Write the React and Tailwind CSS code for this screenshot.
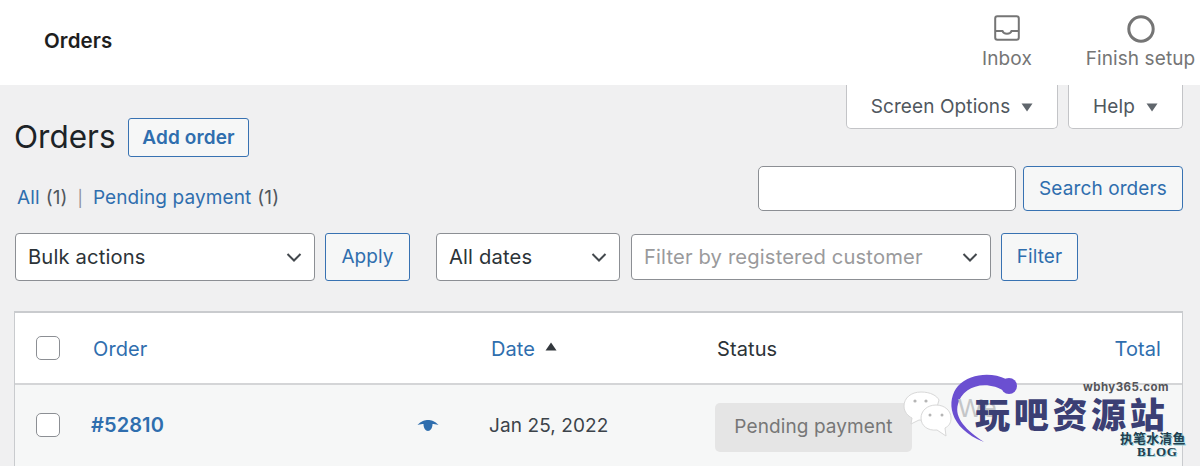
import React from 'react';

const blueBtn = 'flex items-center justify-center rounded-[3px] border-[1.5px] border-[#3872b2] bg-[#f6f7f7] pt-[1px] text-[#2f6eae]';

const Chevron = ({ className }) => (
  <svg width="18" height="12" viewBox="0 0 18 12" fill="none" className={className}>
    <path d="M2.5 3 L9 9.5 L15.5 3" stroke="#43484d" strokeWidth="2" />
  </svg>
);

const Select = ({ label, placeholder, className }) => (
  <div className={`flex items-center justify-between rounded-[4px] border-[1.5px] border-[#8c8f94] bg-white pl-3 pr-[11px] text-[20.2px] tracking-[0.15px] ${className}`}>
    <span className={`pt-[1px] ${placeholder ? 'text-[#9a9a9c]' : 'text-[#2c3338]'}`}>{label}</span>
    <Chevron />
  </div>
);

const Checkbox = () => (
  <div className="h-6 w-6 rounded-[5px] border-[1.5px] border-[#8c8f94] bg-white" />
);

const Caret = () => (
  <svg width="12" height="9" viewBox="0 0 12 9">
    <path d="M0.5 0.5 H11.5 L6 8.5 Z" fill="#60666c" />
  </svg>
);

const TopItem = ({ icon, label, className }) => (
  <div className={`flex flex-col items-center ${className}`}>
    {icon}
    <span className="mt-[6px] whitespace-nowrap text-[19px] leading-6 text-[#757575]">{label}</span>
  </div>
);

const Watermark = () => (
  <div className="absolute left-[900px] top-[370px] h-[96px] w-[300px]">
    <svg width="300" height="96" viewBox="0 0 300 96" className="absolute left-0 top-0">
      <path d="M106 9 C92 2 70 3 58 16 C46 30 48 58 84 72 C66 60 54 48 58 34 C62 18 84 8 106 22 Z" fill="#6b4fd1" />
      <circle cx="109" cy="16" r="8" fill="#6b4fd1" />
      <g fill="#fff" stroke="#d8d8d8" strokeWidth="1">
        <path d="M21 22 C11 22 4 28 4 36 C4 42 8 46 12 48 L11 54 L19 50 C27 51 33 48 35 44 L39 30 C37 26 31 22 21 22 Z" />
        <path d="M36 35 C27 35 21 41 21 48 C21 56 28 61 37 60 L46 66 L45 58 C49 56 51 53 51 48 C51 41 45 35 36 35 Z" />
      </g>
      <g fill="#b5b5b5">
        <circle cx="15" cy="31" r="1.6" />
        <circle cx="26" cy="31" r="1.6" />
        <circle cx="30" cy="45" r="1.5" />
        <circle cx="42" cy="45" r="1.5" />
      </g>
    </svg>
    <span className="absolute left-[58px] top-[22px] text-[26px] leading-8 text-[#c4c6c8] [font-family:'Liberation_Sans',sans-serif]">We</span>
    <span className="absolute left-[183px] top-[9px] text-[11.5px] font-bold leading-4 tracking-[0.45px] text-[#55555a]">wbhy365.com</span>
    <span className="absolute left-[75px] top-[23px] whitespace-nowrap text-[35px] font-black leading-10 tracking-[3.7px] text-[#3b3f74] [font-family:'Noto_Sans_CJK_SC',sans-serif]">玩吧资源站</span>
    <span className="absolute left-[220px] top-[60px] whitespace-nowrap text-[13px] font-bold leading-4 text-[#22404f] [font-family:'Noto_Sans_CJK_SC',sans-serif] [text-shadow:1px_1px_0_#9fd4dc]">执笔水清鱼</span>
    <span className="absolute left-[237px] top-[74px] text-[13px] font-bold leading-4 tracking-[0.8px] text-[#22404f] [font-family:'Liberation_Serif',serif] [text-shadow:1px_1px_0_#9fd4dc]">BLOG</span>
  </div>
);

const App = () => (
  <div className="relative h-[466px] w-[1200px] overflow-hidden bg-[#f0f0f1] font-['Inter',sans-serif] text-[19px] tracking-[0.1px]">
    <header className="flex h-[85px] items-start justify-between bg-white pl-11 pr-[5px]">
      <h2 className="mt-[29px] text-[20.5px] font-semibold leading-6 text-[#1e1e1e]">Orders</h2>
      <div className="flex pt-[15px]">
        <TopItem
          label="Inbox"
          className="mr-[52px] w-[54px]"
          icon={
            <svg width="26" height="26" viewBox="0 0 26 26" fill="none">
              <rect x="1.2" y="1.2" width="23.6" height="23.6" rx="2.2" stroke="#757575" strokeWidth="2" />
              <path d="M1.5 16 H8.5 C9.5 19.5 16.5 19.5 17.5 16 H24.5" stroke="#757575" strokeWidth="2" />
            </svg>
          }
        />
        <TopItem
          label="Finish setup"
          className="w-[109px]"
          icon={
            <svg width="28" height="28" viewBox="0 0 28 28" fill="none" className="mb-[-2px]">
              <circle cx="14" cy="14" r="12.2" stroke="#757575" strokeWidth="3" />
            </svg>
          }
        />
      </div>
    </header>

    <div className="flex justify-end gap-[10px] pr-[17px]">
      <div className="flex h-[44px] w-[212px] items-center justify-center gap-[11px] rounded-b-[5px] border-x border-b border-[#c3c4c7] bg-white pt-[1px] text-[#50575e]">
        Screen Options <Caret />
      </div>
      <div className="flex h-[44px] w-[115px] items-center justify-center gap-[11px] rounded-b-[5px] border-x border-b border-[#c3c4c7] bg-white pt-[1px] text-[#50575e]">
        Help <Caret />
      </div>
    </div>

    <div className="flex items-start justify-between pl-[14px] pr-[17px]">
      <div>
        <div className="mt-[-12px] flex items-center">
          <h1 className="w-[101px] whitespace-nowrap text-[31.5px] leading-[40px] tracking-normal text-[#1d2327]">Orders</h1>
          <button className={`${blueBtn} ml-[13px] h-[39px] w-[121px] pt-[2px] font-semibold`}>Add order</button>
        </div>
        <div className="mt-[29px] flex items-center pl-[3px] leading-6 tracking-[0.1px] text-[#50575e]">
          <span className="text-[#2f6eae]">All</span>
          <span className="ml-[6px]">(1)</span>
          <span className="ml-[10px] text-[16px] text-[#8c8f94]">|</span>
          <span className="ml-[10px] text-[#2f6eae]">Pending payment</span>
          <span className="ml-[6px]">(1)</span>
        </div>
      </div>
      <div className="mt-[37px] flex gap-[7px]">
        <div className="h-[45px] w-[258px] rounded-[5px] border-[1.5px] border-[#8c8f94] bg-white" />
        <button className={`${blueBtn} h-[45px] w-[160px] rounded-[4px]`}>Search orders</button>
      </div>
    </div>

    <div className="mt-[22px] flex items-start pl-[15px]">
      <Select label="Bulk actions" className="h-[48px] w-[300px]" />
      <button className={`${blueBtn} ml-[10px] h-[48px] w-[85px]`}>Apply</button>
      <Select label="All dates" className="ml-[26px] h-[48px] w-[184px]" />
      <Select label="Filter by registered customer" placeholder className="ml-[11px] mt-[1px] h-[46px] w-[360px]" />
      <button className={`${blueBtn} ml-[10px] h-[48px] w-[77px]`}>Filter</button>
    </div>

    <div className="ml-[14px] mr-[17px] mt-[30px] border-x border-t-2 border-[#c9cbce] bg-white">
      <div className="flex h-[72px] items-center border-b-2 border-[#d4d5d7] text-[20px] tracking-[0.1px]">
        <div className="ml-[21px] w-[57px]"><Checkbox /></div>
        <span className="w-[398px] pt-[2px] text-[#2f6eae]">Order</span>
        <span className="flex w-[226px] items-center gap-[10px] pt-[2px] text-[#2f6eae]">
          Date
          <svg width="12" height="9" viewBox="0 0 12 9" className="-mt-[5px]"><path d="M0.5 8.5 H11.5 L6 0.5 Z" fill="#33383d" /></svg>
        </span>
        <span className="pt-[2px] text-[#2c3338]">Status</span>
        <span className="ml-auto mr-[21px] pt-[2px] text-[#2f6eae]">Total</span>
      </div>
      <div className="flex h-[90px] items-start bg-[#f6f7f7] pt-[28px]">
        <div className="ml-[21px] w-[55px]"><Checkbox /></div>
        <span className="w-[326px] text-[20px] font-semibold leading-6 text-[#2f6eae]">#52810</span>
        <svg width="22" height="12" viewBox="0 0 22 12" className="mt-[7px]">
          <path d="M0.5 5 C4 1 8 0 11 0 C14 0 18 1 21.5 5 C18.5 4 17 4 15.5 4 C15.5 8 13.5 11 11 11 C8.5 11 6.5 8 6.5 4 C5 4 3.5 4 0.5 5 Z" fill="#2f6eae" />
        </svg>
        <span className="ml-[50px] w-[226px] pt-[1px] leading-6 text-[#3c434a]">Jan 25, 2022</span>
        <div className="-mt-[10px] flex h-[49px] w-[197px] items-center justify-center rounded-[5px] bg-[#e5e5e5] pb-[1px] text-[#777777]">Pending payment</div>
      </div>
    </div>

    <Watermark />
  </div>
);

export default App;
